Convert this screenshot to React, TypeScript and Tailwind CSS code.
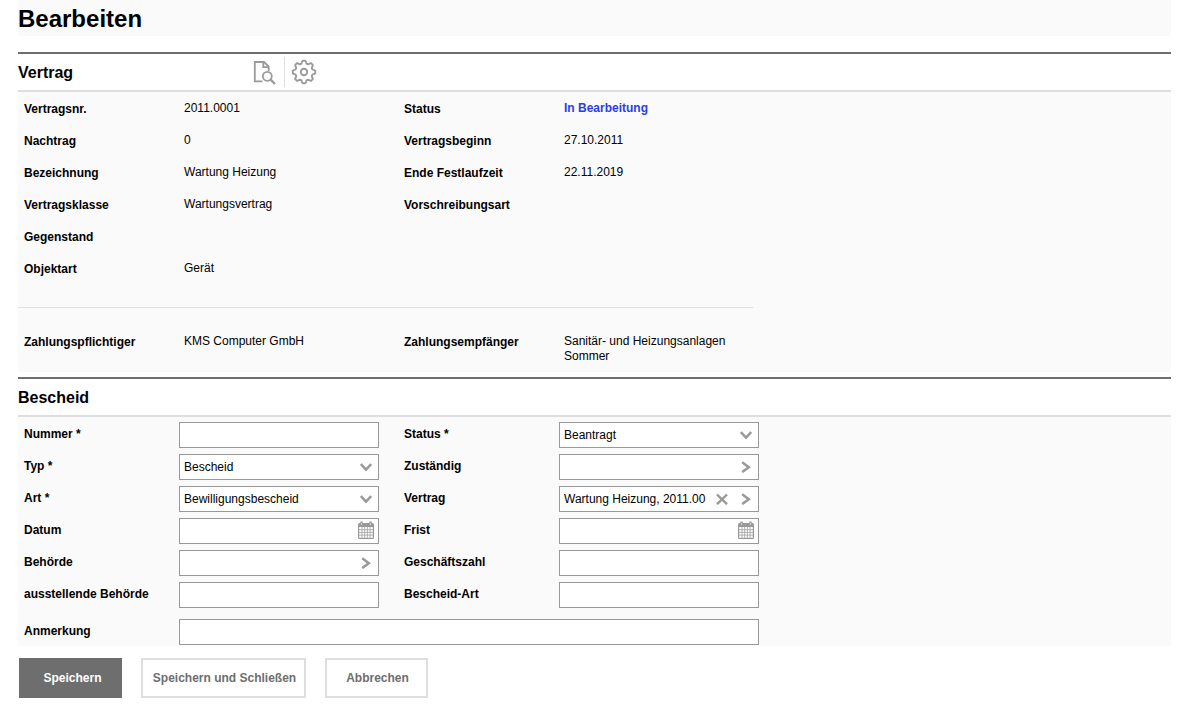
import { useState } from 'react';
import type { ReactNode } from 'react';

const contractRows = [
  ['Vertragsnr.', '2011.0001', 'Status', 'In Bearbeitung'],
  ['Nachtrag', '0', 'Vertragsbeginn', '27.10.2011'],
  ['Bezeichnung', 'Wartung Heizung', 'Ende Festlaufzeit', '22.11.2019'],
  ['Vertragsklasse', 'Wartungsvertrag', 'Vorschreibungsart', ''],
  ['Gegenstand', '', '', ''],
  ['Objektart', 'Gerät', '', ''],
];

const ChevronDown = () => (
  <svg width="12" height="12" viewBox="0 0 12 12" fill="none" stroke="#999" strokeWidth="2.5">
    <path d="M0.8 3 L6 8.6 L11.2 3" />
  </svg>
);

const ChevronRight = () => (
  <svg width="12" height="12" viewBox="0 0 12 12" fill="none" stroke="#999" strokeWidth="2.5">
    <path d="M2.2 1.3 L8.8 6.2 L2.2 11.1" />
  </svg>
);

const Cross = () => (
  <svg width="12" height="12" viewBox="0 0 12 12" fill="none" stroke="#999" strokeWidth="2.4">
    <path d="M1 1.5 L11 11.2 M11 1.5 L1 11.2" />
  </svg>
);

const CalendarIcon = () => (
  <svg width="16" height="20" viewBox="0 0 16 20">
    <rect x="0" y="2" width="16" height="16" rx="1.5" fill="#999" />
    <path d="M3.5 0.5v4M12.5 0.5v4" stroke="#999" strokeWidth="2.4" />
    <path d="M3.5 2v2M12.5 2v2" stroke="#d6d6d6" strokeWidth="1" />
    <rect x="1.2" y="6" width="13.6" height="10.8" fill="#fff" />
    <path d="M4 6v11M6.7 6v11M9.4 6v11M12.1 6v11M1 8.7h14M1 11.4h14M1 14.1h14" stroke="#a8a8a8" strokeWidth="0.9" />
  </svg>
);

const PreviewIcon = () => (
  <svg width="24" height="26" viewBox="0 0 24 26" fill="none" stroke="#9a9a9a" strokeWidth="1.8">
    <path d="M9.5 22.4H1.8V3H11L15.7 7.7V12" />
    <path d="M10.3 3v5.2h5.4" />
    <circle cx="14.3" cy="17.3" r="4.5" />
    <path d="M17.6 20.6L22 25" strokeWidth="2.3" />
  </svg>
);

const GearIcon = () => (
  <svg width="26" height="26" viewBox="0 0 26 26" fill="none" stroke="#9a9a9a" strokeWidth="1.9" strokeLinejoin="round">
    <path d="M10.6 4.4 Q11 2 11.6 1.8 H14.4 Q15 2 15.4 4.4 Q16 5.2 17.6 5.2 Q19.4 3.9 20 4.2 L21.8 6 Q22.1 6.6 20.8 8.4 Q20.8 10 21.6 10.6 Q24 11 24.2 11.6 V14.4 Q24 15 21.6 15.4 Q20.8 16 20.8 17.6 Q22.1 19.4 21.8 20 L20 21.8 Q19.4 22.1 17.6 20.8 Q16 20.8 15.4 21.6 Q15 24 14.4 24.2 H11.6 Q11 24 10.6 21.6 Q10 20.8 8.4 20.8 Q6.6 22.1 6 21.8 L4.2 20 Q3.9 19.4 5.2 17.6 Q5.2 16 4.4 15.4 Q2 15 1.8 14.4 V11.6 Q2 11 4.4 10.6 Q5.2 10 5.2 8.4 Q3.9 6.6 4.2 6 L6 4.2 Q6.6 3.9 8.4 5.2 Q10 5.2 10.6 4.4 Z" />
    <circle cx="13" cy="13" r="3.2" />
  </svg>
);

const SectionHeader = ({ title, children }: { title: string; children?: ReactNode }) => (
  <div className="flex h-10 items-center border-t-2 border-b-2 border-t-[#6e6e6e] border-b-[#dedede]">
    <h2 className="w-[234px] pt-[2px] text-base font-bold">{title}</h2>
    {children}
  </div>
);

const boxClass = 'flex h-[26px] w-full items-center border border-[#999] bg-white';
const inputClass = 'h-full w-full min-w-0 flex-1 bg-transparent px-1 outline-none';

type FieldProps = {
  id: string;
  label: string;
  right?: boolean;
  value?: string;
  options?: string[];
  action?: 'lookup' | 'date';
  clearable?: boolean;
};

const Field = ({ id, label, right, value = '', options, action, clearable }: FieldProps) => {
  const [text, setText] = useState(value);

  return (
    <>
      <label htmlFor={id} className={`pb-[2px] font-bold ${right ? 'pl-[25px]' : 'pl-[6px]'}`}>
        {label}
      </label>
      {options ? (
        <div className="relative">
          <select
            id={id}
            value={text}
            onChange={(e) => setText(e.target.value)}
            className="block h-[26px] w-full appearance-none border border-[#999] bg-white px-1 outline-none"
          >
            {options.map((option) => (
              <option key={option}>{option}</option>
            ))}
          </select>
          <span className="pointer-events-none absolute inset-y-0 right-[7px] flex items-center">
            <ChevronDown />
          </span>
        </div>
      ) : (
        <div className={boxClass}>
          <input id={id} type="text" value={text} onChange={(e) => setText(e.target.value)} className={inputClass} />
          {clearable && (
            <button type="button" aria-label="Leeren" onClick={() => setText('')} className="flex w-6 justify-center">
              <Cross />
            </button>
          )}
          {action && (
            <button type="button" aria-label={label} className="flex w-6 justify-center">
              {action === 'date' ? <CalendarIcon /> : <ChevronRight />}
            </button>
          )}
        </div>
      )}
    </>
  );
};

const App = () => {
  return (
    <main className="mr-[13px] ml-[18px] font-['Liberation_Sans',Arial,sans-serif] text-xs text-black">
      <h1 className="mb-4 h-9 bg-[#fafafa] pt-px text-2xl leading-9 font-bold">Bearbeiten</h1>

      <section className="mb-[5px]">
        <SectionHeader title="Vertrag">
          <button type="button" aria-label="Vorschau" className="flex w-8 pl-px">
            <PreviewIcon />
          </button>
          <button type="button" aria-label="Einstellungen" className="flex h-[30px] items-center border-l border-[#dedede] pl-[6px]">
            <GearIcon />
          </button>
        </SectionHeader>
        <div className="bg-[#fafafa]">
          <dl className="grid auto-rows-[32px] grid-cols-[160px_220px_160px_180px] pl-[6px] leading-8">
            {contractRows.map(([label, value, label2, value2]) => (
              <div key={label} className="contents">
                <dt className="pt-px font-bold">{label}</dt>
                <dd>{value}</dd>
                <dt className="pt-px font-bold">{label2}</dt>
                <dd className={label2 === 'Status' ? 'font-bold text-[#2a3ee6]' : ''}>{value2}</dd>
              </div>
            ))}
          </dl>
          <hr className="mt-[23px] w-[735px] border-[#dedede]" />
          <dl className="grid h-16 grid-cols-[160px_220px_160px_180px] pt-[26px] pl-[6px] leading-[15px]">
            <dt className="pt-px font-bold">Zahlungspflichtiger</dt>
            <dd>KMS Computer GmbH</dd>
            <dt className="pt-px font-bold">Zahlungsempfänger</dt>
            <dd>Sanitär- und Heizungsanlagen Sommer</dd>
          </dl>
        </div>
      </section>

      <form onSubmit={(e) => e.preventDefault()}>
        <SectionHeader title="Bescheid" />
        <div className="bg-[#fafafa] pt-[5px] pb-px">
          <div className="grid grid-cols-[161px_200px_180px_200px] items-center gap-y-[6px]">
            <Field id="nummer" label="Nummer *" />
            <Field id="status" label="Status *" right value="Beantragt" options={['Beantragt']} />
            <Field id="typ" label="Typ *" value="Bescheid" options={['Bescheid']} />
            <Field id="zustaendig" label="Zuständig" right action="lookup" />
            <Field id="art" label="Art *" value="Bewilligungsbescheid" options={['Bewilligungsbescheid']} />
            <Field id="vertrag" label="Vertrag" right value="Wartung Heizung, 2011.00" action="lookup" clearable />
            <Field id="datum" label="Datum" action="date" />
            <Field id="frist" label="Frist" right action="date" />
            <Field id="behoerde" label="Behörde" action="lookup" />
            <Field id="geschaeftszahl" label="Geschäftszahl" right />
            <Field id="ausstellende" label="ausstellende Behörde" />
            <Field id="bescheidart" label="Bescheid-Art" right />
          </div>
          <div className="mt-[11px] grid grid-cols-[161px_580px] items-center">
            <Field id="anmerkung" label="Anmerkung" />
          </div>
        </div>

        <div className="mt-3 ml-px flex gap-[19px] font-bold text-[#6e6e6e]">
          <button type="submit" className="h-10 w-[103px] bg-[#6e6e6e] pl-1 text-white">
            Speichern
          </button>
          <button type="button" className="h-10 w-[165px] border-2 border-[#dedede] pl-[2px]">
            Speichern und Schließen
          </button>
          <button type="button" className="h-10 w-[103px] border-2 border-[#dedede] pl-[2px]">
            Abbrechen
          </button>
        </div>
      </form>
    </main>
  );
};

export default App;
